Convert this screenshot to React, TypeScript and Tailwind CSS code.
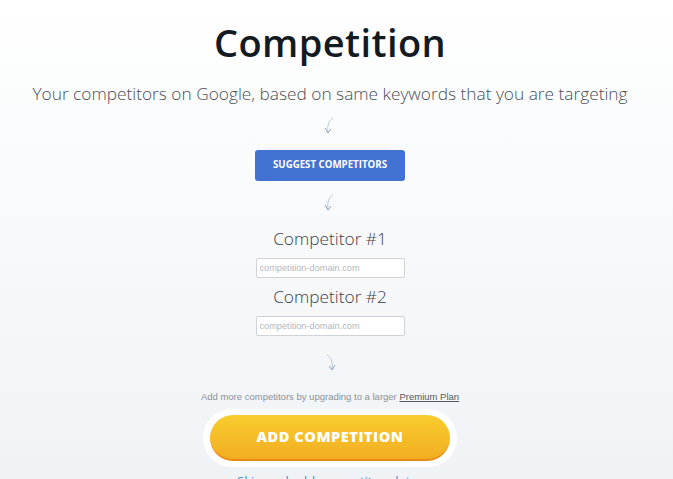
import React from 'react';

const Arrow = ({ flip = false }: { flip?: boolean }) => (
  <svg width="14" height="18" viewBox="0 0 14 18" className={flip ? '-scale-x-100' : ''}>
    <path d="M10 1 C6 3 4 8 5 15" fill="none" stroke="#b8c6d8" strokeWidth="1" />
    <path d="M2 11 L5 16 L8 12" fill="none" stroke="#8fa3bd" strokeWidth="1" />
  </svg>
);

const CompetitionPage = () => {
  return (
    <div
      className="h-[479px] overflow-hidden bg-gradient-to-b from-white to-[#f0f3f6] pr-[13px] text-center"
      style={{ fontFamily: '"Open Sans", sans-serif' }}
    >
      <h1 className="pt-[16px] text-[38px] font-semibold leading-[52px] text-[#141a22] tracking-[0.4px]">
        Competition
      </h1>
      <p className="mt-[14px] text-[17.3px] font-light leading-6 text-[#4a4f57]">
        Your competitors on Google, based on same keywords that you are targeting
      </p>

      <div className="mt-[11px] flex h-[18px] justify-center">
        <Arrow />
      </div>

      <div className="mt-[15px] flex justify-center">
        <button
          className="h-[31px] w-[150px] rounded-[3px] bg-[#4472d3] text-[9.7px] font-bold uppercase text-white"
          style={{ fontFamily: '"Open Sans", sans-serif' }}
        >
          Suggest Competitors
        </button>
      </div>

      <div className="mt-[13px] flex h-[18px] justify-center">
        <Arrow />
      </div>

      <div className="mt-[15px] flex flex-col items-center">
        <label className="text-[17.3px] font-light leading-6 text-[#3b4049]">Competitor #1</label>
        <input
          type="text"
          placeholder="competition-domain.com"
          className="mt-[7px] h-[20px] w-[149px] rounded-[2px] border border-[#cfd3d8] bg-white px-[3px] text-[9.2px] placeholder:text-[#b2b8c0] outline-none"
          style={{ fontFamily: '"Liberation Sans", Arial, sans-serif' }}
        />
        <label className="mt-[7px] text-[17.3px] font-light leading-6 text-[#3b4049]">Competitor #2</label>
        <input
          type="text"
          placeholder="competition-domain.com"
          className="mt-[7px] h-[20px] w-[149px] rounded-[2px] border border-[#cfd3d8] bg-white px-[3px] text-[9.2px] placeholder:text-[#b2b8c0] outline-none"
          style={{ fontFamily: '"Liberation Sans", Arial, sans-serif' }}
        />
      </div>

      <div className="mt-[18px] flex h-[18px] justify-center">
        <Arrow flip />
      </div>

      <p
        className="mt-[19px] text-[9.5px] leading-3 text-[#8c9198]"
        style={{ fontFamily: '"Liberation Sans", Arial, sans-serif' }}
      >
        Add more competitors by upgrading to a larger{' '}
        <a href="#" className="text-[#555a61] underline">
          Premium Plan
        </a>
      </p>

      <div className="mt-[6px] flex justify-center">
        <div className="rounded-full bg-white p-[6px] pl-[7px] pr-[7px]">
          <button className="h-[46px] w-[240px] rounded-full border-b-2 border-[#ea8a10] bg-gradient-to-b from-[#f8cd2e] to-[#f2ad22] text-[14.6px] font-extrabold uppercase tracking-[0.5px] text-white">
            Add Competition
          </button>
        </div>
      </div>

      <p className="mt-[4px] text-[13px] leading-5 text-[#3a8fd6]">
        <a href="#">Skip and add competitors later</a>
      </p>
    </div>
  );
};

export default CompetitionPage;
